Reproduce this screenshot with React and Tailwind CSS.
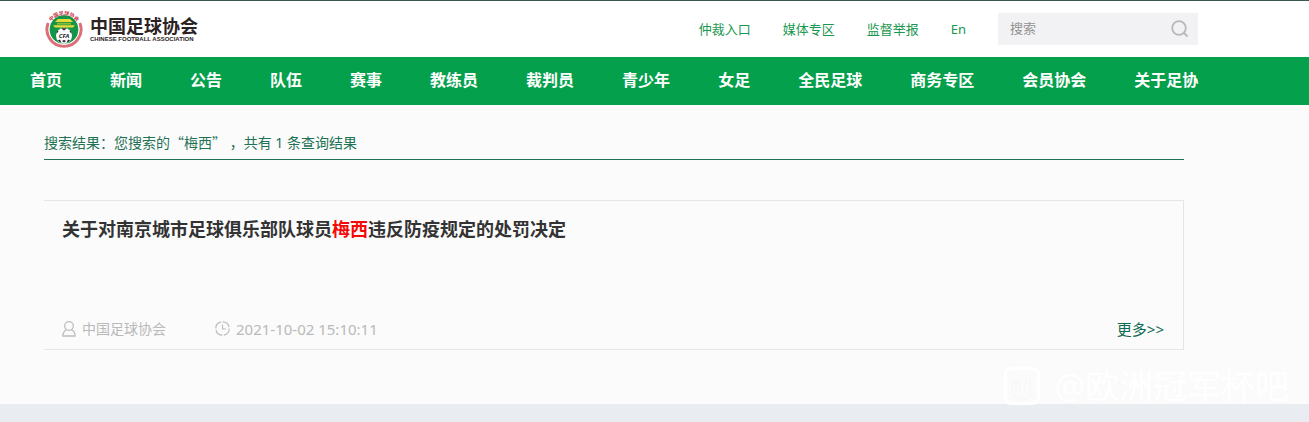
import { useState } from "react"

const topLinks = ["仲裁入口", "媒体专区", "监督举报", "En"]

const navItems = [
  "首页",
  "新闻",
  "公告",
  "队伍",
  "赛事",
  "教练员",
  "裁判员",
  "青少年",
  "女足",
  "全民足球",
  "商务专区",
  "会员协会",
  "关于足协",
]

const App = () => {
  const [keyword, setKeyword] = useState("")

  return (
    <div
      lang="zh-CN"
      className="relative min-h-screen flex flex-col overflow-hidden bg-[#e9edf2] font-['Noto_Sans','Noto_Sans_CJK_SC',sans-serif]"
    >
      <header className="border-t border-[#3a5a4c] bg-white">
        <div className="ml-[30px] max-w-[1168px] h-14 flex items-center justify-between">
          <Logo />
          <div className="flex items-center gap-8">
            {topLinks.map((link) => (
              <a key={link} href="#" className="text-[13px] leading-5 text-[#1a9750]">
                {link}
              </a>
            ))}
            <form className="flex h-8 w-[200px] items-center bg-[#f2f2f4] px-2" onSubmit={(e) => e.preventDefault()}>
              <input
                type="text"
                aria-label="搜索"
                placeholder="搜索"
                value={keyword}
                onChange={(e) => setKeyword(e.target.value)}
                className="min-w-0 flex-1 bg-transparent pl-1 text-[13px] text-gray-700 outline-none placeholder:text-[#929292]"
              />
              <button type="submit" aria-label="提交搜索">
                <SearchIcon />
              </button>
            </form>
          </div>
        </div>
      </header>

      <nav className="bg-[#05a04b]">
        <ul className="ml-[30px] flex h-12 items-center gap-12 pb-0.5">
          {navItems.map((item) => (
            <li key={item}>
              <a href="#" className="block whitespace-nowrap text-base font-bold text-white">
                {item}
              </a>
            </li>
          ))}
        </ul>
      </nav>

      <main className="bg-[#fbfbfb] pb-[54px] pl-11">
        <div className="max-w-[1140px]">
          <p className="mb-10 border-b border-[#1f7254] pt-[25px] pb-1 text-sm leading-6 text-[#1f7254]">
            搜索结果{"\uff1a"}您搜索的<Quote>“</Quote>梅西<Quote>”</Quote> {"\uff0c"}共有 1 条查询结果
          </p>
          <ResultCard />
        </div>
      </main>

      <Watermark />
    </div>
  )
}

const Quote = ({ children }) => <span className="font-['Noto_Sans_CJK_SC',sans-serif]">{children}</span>

const ResultCard = () => (
  <article className="flex h-[150px] flex-col justify-between border-y border-r border-[#e5e5e5] pt-4 pr-[19px] pb-2 pl-[18px]">
    <h2 className="text-lg leading-6 font-bold text-[#333]">
      <a href="#">
        关于对南京城市足球俱乐部队球员<span className="text-[#f50a0a]">梅西</span>违反防疫规定的处罚决定
      </a>
    </h2>
    <div className="flex items-center text-sm leading-6 text-[#b9b9b9]">
      <span className="flex items-center gap-1.5">
        <UserIcon />
        中国足球协会
      </span>
      <span className="ml-12 flex items-center gap-1.5">
        <ClockIcon />
        <time dateTime="2021-10-02T15:10:11" className="text-[15px]">
          2021-10-02 15:10:11
        </time>
      </span>
      <a href="#" className="ml-auto text-[15px] text-[#0f6a52]">
        更多&gt;&gt;
      </a>
    </div>
  </article>
)

const Logo = () => (
  <a href="#" className="ml-3.5 flex items-center gap-1.5">
    <svg width="40" height="40" viewBox="0 0 40 40" role="img" aria-label="CFA">
      <defs>
        <path id="arc" d="M5.6 15.5 A15.6 15.6 0 0 1 34.4 15.5" />
      </defs>
      <path d="M4.2 14 A17 17 0 1 0 35.8 14" fill="none" stroke="#dc6e77" strokeWidth="3" />
      <circle cx="20" cy="20.5" r="14.6" fill="#149447" />
      <circle cx="20" cy="20.5" r="15" fill="none" stroke="#fff" strokeWidth="0.8" />
      <text fontSize="5" fontWeight="bold" fill="#c93646">
        <textPath href="#arc" startOffset="50%" textAnchor="middle">
          中国足球协会
        </textPath>
      </text>
      <path d="M14 10 L26 10 L29 13 L11 13 Z" fill="#e6db38" />
      <path d="M13 13.8 H27 V15.6 H13 Z" fill="#91b737" />
      <path d="M9 16.2 H31 L29 18.6 H11 Z" fill="#e6db38" />
      <circle cx="20" cy="26.8" r="8" fill="#fff" />
      <path d="M17 19.2 L20 21.4 L23 19.2 Z M12.3 24.6 L14.5 22.8 L13.5 21.4 Z M27.7 24.6 L25.5 22.8 L26.5 21.4 Z" fill="#222" />
      <path d="M13.8 31.5 L16 30.4 L17.5 34.2 Z M26.2 31.5 L24 30.4 L22.5 34.2 Z M18 32 L20 31 L22 32 L20 33.6 Z" fill="#222" />
      <text x="20" y="29" textAnchor="middle" fontSize="6" fontWeight="bold" fontStyle="italic" fill="#222">
        CFA
      </text>
    </svg>
    <span className="flex flex-col text-[#2b2224]">
      <span className="text-lg leading-5 font-bold">中国足球协会</span>
      <span className="font-['Liberation_Sans',sans-serif] text-[6px] leading-[7px] font-bold whitespace-nowrap">
        CHINESE FOOTBALL ASSOCIATION
      </span>
    </span>
  </a>
)

const SearchIcon = () => (
  <svg width="20" height="20" viewBox="0 0 20 20" fill="none" stroke="#b8b8b8" strokeWidth="1.8">
    <circle cx="9" cy="9" r="6.8" />
    <path d="M14 14 L17.5 17.5" />
  </svg>
)

const UserIcon = () => (
  <svg width="14" height="16" viewBox="0 0 14 16" fill="none" stroke="#bdbdbd" strokeWidth="1.3">
    <circle cx="7" cy="5" r="4.3" />
    <path d="M4.5 8.8 C2 9.8 1 11.8 0.8 15 H13.2 C13 11.8 12 9.8 9.5 8.8" strokeLinejoin="round" />
  </svg>
)

const ClockIcon = () => (
  <svg width="16" height="16" viewBox="0 0 16 16" fill="none" stroke="#bdbdbd" strokeWidth="1.2">
    <circle cx="8.5" cy="7.5" r="6.7" strokeDasharray="9 1.5" />
    <path d="M8.5 3.5 V8 H12" />
  </svg>
)

const Watermark = () => (
  <div className="pointer-events-none absolute right-5 bottom-4 flex items-center gap-3.5 text-white">
    <svg width="36" height="38" viewBox="0 0 36 38" fill="none">
      <rect x="1.5" y="1.5" width="33" height="35" rx="6" fill="#fbfbfb" stroke="#fff" strokeWidth="3" />
      <path
        d="M8 15 V24 M12 15 V24 M16 15 V24 M8 15 H16 M20 24 L23 11 M26 10 C25 16 29 20 25 25 M7 26 C12 31 15 31 18 34 C21 31 24 31 29 26"
        stroke="#f7f7f7"
        strokeWidth="1.5"
      />
    </svg>
    <span className="text-[34px] leading-10">@欧洲冠军杯吧</span>
  </div>
)

export default App
